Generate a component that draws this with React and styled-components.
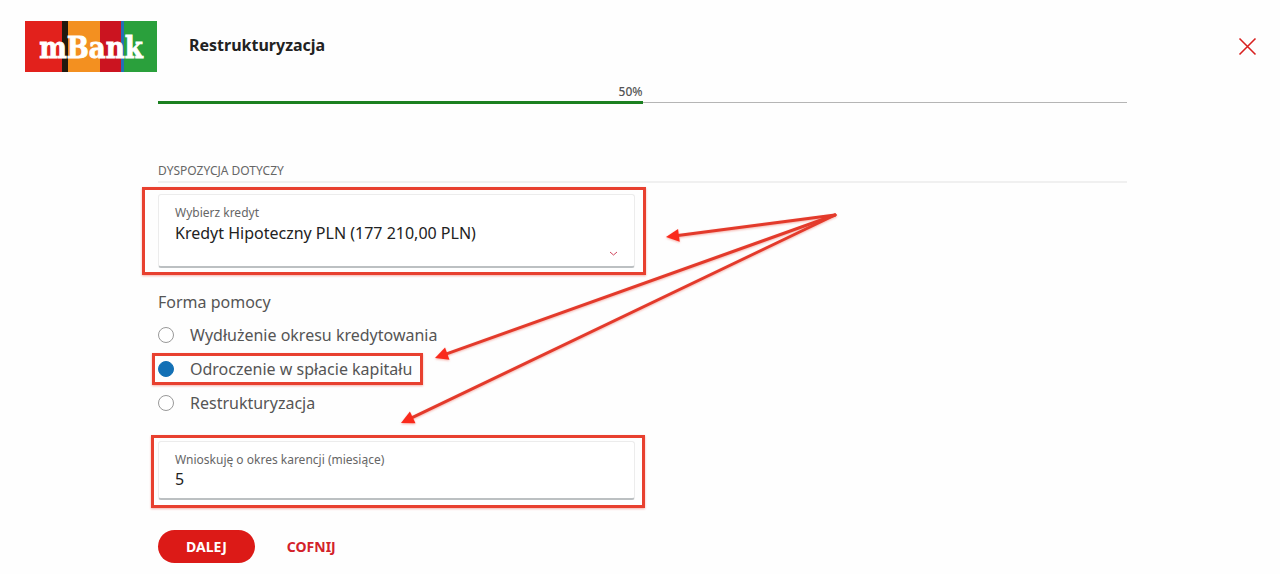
import { useState } from "react";
import styled, { createGlobalStyle } from "styled-components";

const GlobalStyle = createGlobalStyle`
  * {
    box-sizing: border-box;
  }
  body {
    margin: 0;
    background: #fefefe;
    color: #555;
    font-family: "Noto Sans", "Open Sans", sans-serif;
    font-size: 16px;
    line-height: 24px;
  }
  button,
  input,
  select {
    font-family: inherit;
  }
`;

const Page = styled.div`
  position: relative;
`;

const Header = styled.header`
  display: flex;
  align-items: center;
  gap: 32px;
  padding: 21px 23px 0 25px;
`;

const Logo = styled.svg`
  display: block;
  width: 132px;
  height: 51px;
`;

const Title = styled.h1`
  flex: 1;
  margin: 0;
  padding-bottom: 4px;
  color: #222;
  font-size: 16px;
  font-weight: 700;
  line-height: 24px;
`;

const CloseButton = styled.button`
  display: flex;
  padding: 0;
  border: 0;
  background: none;
  color: #d8201f;
  cursor: pointer;
`;

const Main = styled.main`
  margin: 0 153px 0 158px;
  padding-top: 12px;
`;

const Progress = styled.div`
  display: flex;
  flex-direction: column;
`;

const ProgressValue = styled.span`
  color: #555;
  font-size: 12px;
  font-weight: 500;
  line-height: 16px;
  text-align: right;
`;

const ProgressTrack = styled.div`
  display: flex;
  align-items: center;
  height: 4px;
  background: linear-gradient(#b5b5b5, #b5b5b5) center / 100% 1px no-repeat;
`;

const ProgressBar = styled.div`
  height: 3px;
  background: #1b8020;
`;

const SectionTitle = styled.h2`
  margin: 59px 0 11px;
  padding-bottom: 2px;
  border-bottom: 2px solid #f0f0f0;
  color: #666;
  font-size: 12px;
  font-weight: 400;
  line-height: 16px;
`;

const Columns = styled.div`
  display: grid;
  grid-template-columns: 1fr 1fr;
  gap: 16px;
`;

const Form = styled.form`
  min-width: 0;
`;

/* red frame drawn round the part it wraps */
const Marked = styled.div`
  position: relative;
  width: ${(props) => (props.$fit ? "fit-content" : "auto")};

  &::after {
    content: "";
    position: absolute;
    inset: ${(props) => props.$inset};
    border: 3px solid #e8402f;
    box-shadow: 0 1px 2px rgba(232, 64, 47, 0.4);
    pointer-events: none;
  }
`;

const Field = styled.div`
  position: relative;
  display: flex;
  flex-direction: column;
  height: ${(props) => (props.$tall ? "74px" : "59px")};
  padding: 10px 16px;
  border: 1px solid #ececec;
  border-bottom: 2px solid #bcc0c2;
  border-radius: 3px;
  background: #fff;

  svg {
    position: absolute;
    right: 16px;
    bottom: 8px;
    pointer-events: none;
  }
`;

const FieldLabel = styled.label`
  color: #666;
  font-size: 12px;
  line-height: 16px;
`;

const Select = styled.select`
  appearance: none;
  width: 100%;
  height: 24px;
  padding: 0;
  border: 0;
  outline: 0;
  background: none;
  color: #222;
  font-size: 16px;
`;

const Input = styled.input`
  width: 100%;
  height: 24px;
  padding: 0;
  border: 0;
  outline: 0;
  background: none;
  color: #222;
  font-size: 16px;
`;

const Options = styled.fieldset`
  display: flex;
  flex-direction: column;
  gap: 10px;
  min-width: 0;
  margin: 22px 0 26px;
  padding: 0;
  border: 0;
`;

const Legend = styled.legend`
  margin-bottom: 9px;
  padding: 0;
`;

const Option = styled.label`
  display: flex;
  align-items: center;
  gap: 16px;
  cursor: pointer;
`;

const Radio = styled.input`
  appearance: none;
  width: 16px;
  height: 16px;
  margin: 0;
  border: 1px solid #999;
  border-radius: 50%;
  background: #fff;

  &:checked {
    border-color: #1370b5;
    background: #1370b5;
  }
`;

const Actions = styled.div`
  display: flex;
  gap: 4px;
  margin-top: 30px;
`;

const Button = styled.button`
  height: 33px;
  padding: 0 28px;
  border: 0;
  border-radius: 17px;
  background: ${(props) => (props.$primary ? "#dc1a17" : "transparent")};
  color: ${(props) => (props.$primary ? "#fff" : "#d3222a")};
  font-size: 14px;
  font-weight: 700;
  line-height: 20px;
  cursor: pointer;
`;

const Arrows = styled.svg`
  position: absolute;
  top: 0;
  left: 0;
  overflow: visible;
  pointer-events: none;
  filter: drop-shadow(0 1px 1px rgba(232, 64, 47, 0.4));
`;

const FORMS = [
  { id: "extension", label: "Wydłużenie okresu kredytowania" },
  { id: "deferral", label: "Odroczenie w spłacie kapitału", marked: true },
  { id: "restructuring", label: "Restrukturyzacja" },
];

const ARROWS = [
  { x: 666, y: 237 },
  { x: 435, y: 358 },
  { x: 401, y: 423 },
];

const START = { x: 835, y: 215 };

const BankLogo = () => (
  <Logo viewBox="0 0 132 51" role="img" aria-label="mBank">
    <rect width="132" height="51" fill="#e2211c" />
    <rect x="37" width="6" height="51" fill="#22190f" />
    <rect x="43" width="32" height="51" fill="#f39020" />
    <rect x="75" width="21" height="51" fill="#cb1420" />
    <rect x="96" width="3" height="51" fill="#2470b5" />
    <rect x="99" width="33" height="51" fill="#2aa03c" />
    <text
      x="66"
      y="37"
      textAnchor="middle"
      fill="#fff"
      stroke="#fff"
      strokeWidth="0.8"
      fontFamily="'DejaVu Serif Condensed', 'DejaVu Serif', serif"
      fontSize="29"
      fontWeight="700"
    >
      mBank
    </text>
  </Logo>
);

const Arrow = ({ x, y }) => {
  const angle = (Math.atan2(y - START.y, x - START.x) * 180) / Math.PI;
  const length = Math.hypot(x - START.x, y - START.y);
  return (
    <g transform={`translate(${x} ${y}) rotate(${angle})`}>
      <path d={`M-${length} 0H-10`} stroke="#e33a2b" strokeWidth="3" strokeLinecap="round" />
      <path d="M0 0L-13 -6.500V6.500Z" fill="#fa2a1c" />
    </g>
  );
};

export default function App() {
  const [form, setForm] = useState("deferral");
  const [months, setMonths] = useState("5");
  const progress = 50;

  const renderOption = ({ id, label }) => (
    <Option key={id}>
      <Radio
        type="radio"
        name="form"
        value={id}
        checked={form === id}
        onChange={() => setForm(id)}
      />
      {label}
    </Option>
  );

  return (
    <Page>
      <GlobalStyle />
      <Header>
        <BankLogo />
        <Title>Restrukturyzacja</Title>
        <CloseButton type="button" aria-label="Zamknij">
          <svg width="19" height="19" viewBox="0 0 19 19" fill="none" stroke="currentColor">
            <path d="M1.500 1.500L17.500 17.500M17.500 1.500L1.500 17.500" strokeWidth="1.600" />
          </svg>
        </CloseButton>
      </Header>
      <Main>
        <Progress>
          <ProgressValue style={{ width: `${progress}%` }}>{progress}%</ProgressValue>
          <ProgressTrack>
            <ProgressBar style={{ width: `${progress}%` }} />
          </ProgressTrack>
        </Progress>
        <SectionTitle>DYSPOZYCJA DOTYCZY</SectionTitle>
        <Columns>
          <Form onSubmit={(e) => e.preventDefault()}>
            <Marked $inset="-7px -11px -7px -16px">
              <Field $tall>
                <FieldLabel htmlFor="loan">Wybierz kredyt</FieldLabel>
                <Select id="loan">
                  <option>Kredyt Hipoteczny PLN (177 210,00 PLN)</option>
                </Select>
                <svg width="9" height="9" viewBox="0 0 9 9" fill="none" stroke="#d0445c">
                  <path d="M1 3L4.500 6L8 3" />
                </svg>
              </Field>
            </Marked>
            <Options>
              <Legend>Forma pomocy</Legend>
              {FORMS.map((item) =>
                item.marked ? (
                  <Marked key={item.id} $fit $inset="-4px -11px -4px -6px">
                    {renderOption(item)}
                  </Marked>
                ) : (
                  renderOption(item)
                )
              )}
            </Options>
            <Marked $inset="-6px -10px -8px -7px">
              <Field>
                <FieldLabel htmlFor="months">Wnioskuję o okres karencji (miesiące)</FieldLabel>
                <Input id="months" value={months} onChange={(e) => setMonths(e.target.value)} />
              </Field>
            </Marked>
            <Actions>
              <Button type="submit" $primary>
                DALEJ
              </Button>
              <Button type="button">COFNIJ</Button>
            </Actions>
          </Form>
        </Columns>
      </Main>
      <Arrows width="1" height="1" aria-hidden="true">
        {ARROWS.map((arrow) => (
          <Arrow key={arrow.y} {...arrow} />
        ))}
      </Arrows>
    </Page>
  );
}
